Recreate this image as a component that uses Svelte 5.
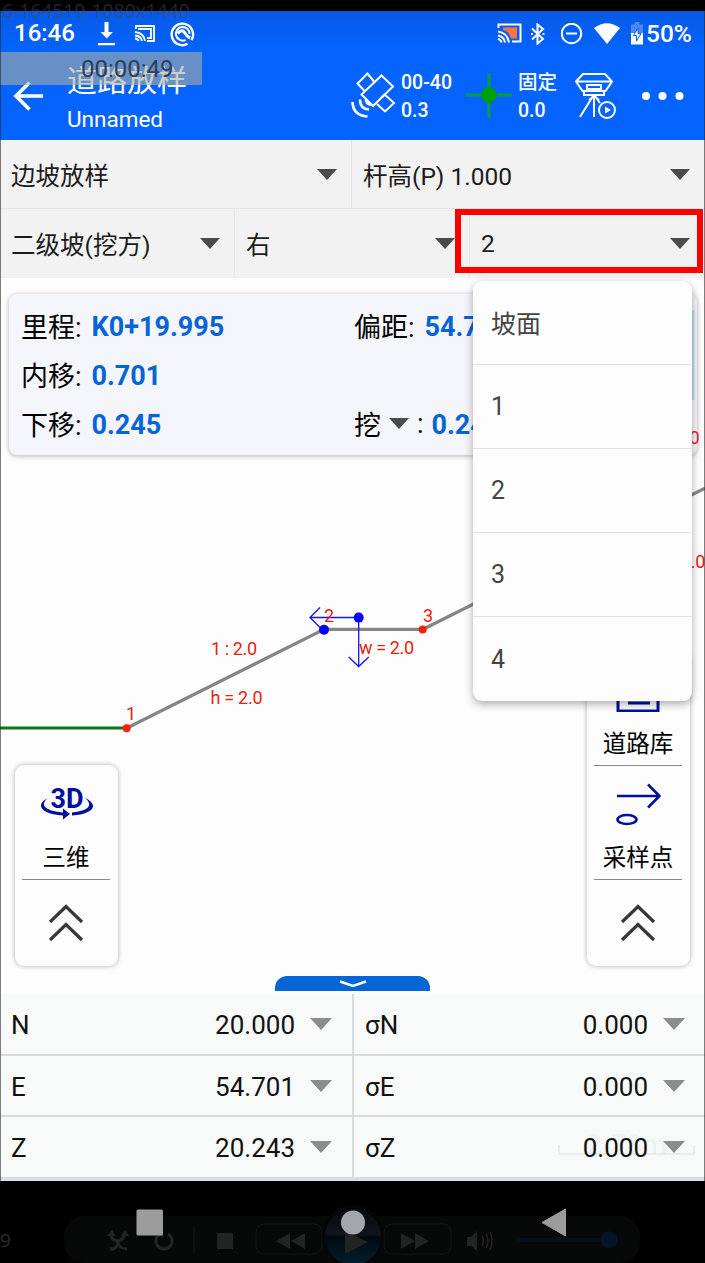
<script>
  const infoRows = [
    [{ label: '里程', value: 'K0+19.995' }, { label: '偏距', value: '54.701' }],
    [{ label: '内移', value: '0.701' }],
    [{ label: '下移', value: '0.245' }, { label: '挖', value: '0.245', select: true }],
  ];

  const coords = [
    { label: 'N', value: '20.000' },
    { label: 'σN', value: '0.000' },
    { label: 'E', value: '54.701' },
    { label: 'σE', value: '0.000' },
    { label: 'Z', value: '20.243' },
    { label: 'σZ', value: '0.000' },
  ];

  const layers = ['坡面', '1', '2', '3', '4'];

  let layer = $state('2');
  let menuOpen = $state(true);

  function pick(item) {
    layer = item;
    menuOpen = false;
  }
</script>

{#snippet caret()}
  <svg class="caret" width="20" height="11" viewBox="0 0 20 11"><path d="M0 0H20L10 11Z" fill="currentColor" /></svg>
{/snippet}

{#snippet chevrons()}
  <div class="expand">
    <svg width="36" height="38" viewBox="0 0 36 38" fill="none" stroke="#383838" stroke-width="3.2">
      <path d="M2 18L18 2.500L34 18M2 36L18 20.500L34 36" />
    </svg>
  </div>
{/snippet}

<div class="screen">
  <div class="top-strip"></div>

  <header>
    <div class="status">
      <span class="clock">16:46</span>
      <svg width="20" height="24" viewBox="0 0 20 24" fill="#fff"><path d="M7.500 0h4v10h4.500l-6.300 6.500L3.500 10h4zM1 21h17v2.200H1z" /></svg>
      <svg width="22" height="20" viewBox="0 0 22 20" fill="none" stroke="#fff" stroke-width="1.8">
        <path d="M2 5V2h18v15h-7M5 6V5h12v9h-4M1 8q9 1 10 9M1 11.500q6 .5 7 5.500M1 14.500q3 .3 3.500 2.500" />
      </svg>
      <svg width="26" height="26" viewBox="0 0 26 26" fill="none" stroke="#fff">
        <path d="M17.500 22.800A10.700 10.700 0 1 1 21.500 19" stroke-width="2.400" />
        <path d="M15.500 19A6.800 6.800 0 1 1 19.500 13" stroke-width="2" />
        <path d="M7.500 12.500Q12 7.500 14.500 11.500T20 17" stroke-width="3.200" />
      </svg>
      <svg width="25" height="21" viewBox="0 0 25 21" fill="none" stroke="#fff" stroke-width="2">
        <path d="M6 4.500h14v11h-6Q12 8 6 7z" fill="#ff743c" stroke="none" />
        <path d="M1.500 5V1.500h22v17H15M1 8.500q9 1 11 11M1 12.500q6 1 7 7M1 16q3 .5 3.500 3.500" />
      </svg>
      <svg width="16" height="22" viewBox="0 0 16 22" fill="none" stroke="#fff" stroke-width="2">
        <path d="M1 5.500L12 16L6.500 20.500V1.500L12 6L1 16.500" /><path d="M0 11h2M11.500 11h2" />
      </svg>
      <svg width="22" height="22" viewBox="0 0 22 22" fill="none" stroke="#fff" stroke-width="2"><circle cx="10.500" cy="10.500" r="9.700" /><path d="M5 10.500h11" /></svg>
      <svg width="26" height="22" viewBox="0 0 26 22"><path d="M0 5Q13-4.500 26 5L13 21Z" fill="#fff" /></svg>
      <svg width="12" height="23" viewBox="0 0 12 23">
        <path d="M3.500 0h5v2.500H12V11H0V2.500h3.500z" fill="#4c87f3" />
        <path d="M0 11h12v11.500H0z" fill="#fff" />
        <path d="M7 6L2.500 13.500h3V19L10 11.500H7z" fill="#fff" stroke="#0860ef" stroke-width="1" />
      </svg>
      <span class="battery">50%</span>
    </div>

    <div class="app-bar">
      <svg class="back" width="32" height="30" viewBox="0 0 32 30" fill="none" stroke="#fff" stroke-width="3.600"><path d="M30 15H3M16.500 1.500L3 15L16.500 28.500" /></svg>
      <div class="titles">
        <span class="title">道路放样</span>
        <span class="subtitle">Unnamed</span>
      </div>
      <svg width="46" height="48" viewBox="0 0 46 48" fill="none" stroke="#fff" stroke-width="2">
        <path d="M31.500 3.500L43 14.500L23 34L11.500 22.500Z" />
        <path d="M24 9.500L17.500 1.500L7.500 11.500L15 19.500M30 27L34.500 22.500L44 31L35 39.500L27 32" />
        <path d="M16 27Q15 32 21 33" stroke-width="2.200" />
        <path d="M10 27.500Q10 37 19 37.500M2.500 30Q3 43.500 17.500 44.500" stroke-width="2.700" />
      </svg>
      <div class="readout"><span>00-40</span><span>0.3</span></div>
      <svg width="46" height="46" viewBox="0 0 46 46"><path d="M0 22H46M23 0V45" stroke="#0a9b42" stroke-width="3" /><circle cx="23" cy="22" r="7.800" fill="#00a000" /></svg>
      <div class="readout"><span>固定</span><span>0.0</span></div>
      <svg width="42" height="48" viewBox="0 0 42 48" fill="none" stroke="#fff" stroke-width="2">
        <path d="M8 2H30L37 9.500L30.500 19H7.500L1 9.500ZM1.500 9.500H36.500M12 13H26V17H12ZM9 19.500V23H29V19.500" />
        <path d="M19 23V45M18 24L5 45M20 24L25 31M14 28L19 24L24 28" />
        <circle cx="32" cy="38" r="8" /><path d="M30 34.500L36 38L30 41.500Z" fill="#fff" stroke="none" />
      </svg>
      <svg width="44" height="10" viewBox="0 0 44 10" fill="#fff"><circle cx="5" cy="5" r="4" /><circle cx="21.500" cy="5" r="4" /><circle cx="38.500" cy="5" r="4" /></svg>
    </div>

    <span class="file-name">6-164519-1080x1440</span>
    <span class="rec-time">00:00:49</span>
  </header>

  <div class="selects two">
    <button class="select">边坡放样{@render caret()}</button>
    <button class="select">杆高(P) 1.000{@render caret()}</button>
  </div>
  <div class="selects three">
    <button class="select">二级坡(挖方){@render caret()}</button>
    <button class="select">右{@render caret()}</button>
    <div class="layer">
      <button class="select" onclick={() => (menuOpen = !menuOpen)}>{layer}{@render caret()}</button>
      <div class="highlight"></div>
      {#if menuOpen}
        <div class="menu">
          {#each layers as item}
            <button class="menu-item" onclick={() => pick(item)}>{item}</button>
          {/each}
        </div>
      {/if}
    </div>
  </div>

  <main>
    <div class="info">
      {#each infoRows as row}
        <div class="info-row">
          {#each row as cell}
            <div class="info-cell">
              {#if cell.select}
                <span>{cell.label}</span>{@render caret()}<span>:</span>
              {:else}
                <span class="name">{cell.label}:</span>
              {/if}
              <b>{cell.value}</b>
            </div>
          {/each}
        </div>
      {/each}
    </div>

    <svg class="profile" viewBox="0 278 705 716">
      <path d="M0 728H127" stroke="#087a12" stroke-width="3.200" />
      <path d="M127 728L324 629.300H423L705 488.300" fill="none" stroke="#858585" stroke-width="3.200" />
      <path d="M693 310V400" stroke="#c3dcea" stroke-width="3" />
      <g fill="#ff1e0a">
        <circle cx="126.700" cy="728.200" r="4" />
        <circle cx="422.700" cy="629.500" r="4" />
      </g>
      <g stroke="#1414e6" stroke-width="1.300" fill="none">
        <path d="M358.700 617.500H310M320 607.500L310 617.500L321 628.500" />
        <path d="M358.700 617.500V666.500M348.700 657L358.700 666.500L368.700 657" />
      </g>
      <g fill="#0505ff">
        <circle cx="324" cy="629.700" r="5" />
        <circle cx="358.700" cy="617.600" r="5" />
      </g>
      <g class="marks">
        <text x="126" y="719.500">1</text>
        <text x="324" y="621.500">2</text>
        <text x="423" y="621.500">3</text>
        <text x="211" y="655" textLength="46">1 : 2.0</text>
        <text x="210.500" y="704" textLength="52">h = 2.0</text>
        <text x="359" y="654" textLength="55">w = 2.0</text>
        <text x="699.500" y="444" text-anchor="end">0</text>
        <text x="705.500" y="568" text-anchor="end">.0</text>
      </g>
    </svg>

    <div class="tools">
      <div class="panel">
        <div class="tool">
          <svg width="54" height="40" viewBox="0 0 54 40">
            <text class="three-d" x="28" y="25.500" text-anchor="middle" textLength="33">3D</text>
            <path d="M9 16C-4 22 1 32 24 33.500V37.500L31 32L24 26.500V30.500C6 29 0 23 9 16Z" fill="#00109c" />
            <path d="M46 16C61 23 54 32 33 33.500V30.500C49 29 55 23 46 16Z" fill="#00109c" />
          </svg>
          <span>三维</span>
        </div>
        {@render chevrons()}
      </div>
      <div class="panel">
        <div class="tool">
          <svg width="54" height="44" viewBox="0 0 54 44" fill="none" stroke="#00109c" stroke-width="3"><path d="M7 3H47V43H7ZM17 15H39M17 25H39M17 35H39" /></svg>
          <span>道路库</span>
        </div>
        <div class="tool">
          <svg width="54" height="44" viewBox="0 0 54 44" fill="none" stroke="#00109c" stroke-width="2.600">
            <path d="M6 13H48M37 1.500L48.500 13L37 24.500" stroke-linejoin="round" /><ellipse cx="16" cy="36.500" rx="9.500" ry="4.500" />
          </svg>
          <span>采样点</span>
        </div>
        {@render chevrons()}
      </div>
    </div>

    <button class="drawer-tab" aria-label="collapse">
      <svg width="28" height="8" viewBox="0 0 28 8" fill="none" stroke="#fff" stroke-width="2.400"><path d="M1 1.500L14 6L27 1.500" /></svg>
    </button>
  </main>

  <div class="coords">
    {#each coords as item}
      <div class="coord">
        <span>{item.label}</span>
        <span class="value">{item.value}</span>
        <svg width="22" height="12" viewBox="0 0 22 12"><path d="M0 0H22L11 12Z" fill="#8c8c8c" /></svg>
      </div>
    {/each}
    <div class="scale">2.78m</div>
  </div>

  <footer>
    <svg width="705" height="82" viewBox="0 1181 705 82">
      <defs>
        <linearGradient id="orb" x1="0" y1="0" x2="0" y2="1">
          <stop offset="0" stop-color="#07090c" />
          <stop offset=".45" stop-color="#10151d" />
          <stop offset=".5" stop-color="#020812" />
          <stop offset="1" stop-color="#03202c" />
        </linearGradient>
      </defs>
      <rect x="64" y="1216" width="576" height="47" rx="20" fill="#070909" />
      <g fill="none" stroke="#141616">
        <rect x="256" y="1224" width="66" height="30" rx="8" />
        <rect x="384" y="1224" width="67" height="30" rx="8" />
        <path d="M194 1226V1254" />
      </g>
      <circle cx="353" cy="1236" r="31" fill="#050606" />
      <circle cx="353" cy="1237" r="28" fill="url(#orb)" />
      <g fill="none" stroke="#242626" stroke-width="3">
        <path d="M110 1249H113Q118 1247 118 1241Q124 1240 125 1233M111 1233Q111 1240 117 1241Q119 1249 127 1249" />
        <path d="M160 1234A8 8 0 1 0 168 1234" />
        <path d="M482 1236Q485 1241 482 1246M486 1234Q490 1241 486 1248M490 1232Q494 1241 490 1250" stroke-width="1.500" />
      </g>
      <g fill="#222424">
        <path d="M107 1236L112 1230L116 1236ZM121 1236L125 1230L129 1236ZM156 1231H163V1238Z" />
        <rect x="217" y="1233" width="16" height="16" />
        <path d="M276 1241L290 1233V1249ZM291 1241L305 1233V1249Z" />
        <path d="M345 1231L368 1242L345 1254Z" />
        <path d="M401 1233L415 1241L401 1249ZM415 1233L429 1241L415 1249Z" />
        <path d="M467 1237H471L477 1231V1251L471 1246H467Z" />
      </g>
      <path d="M516 1240H604" stroke="#040f22" stroke-width="4" />
      <circle cx="609" cy="1240" r="8.500" fill="#051428" />
      <text x="-6" y="1247" class="ghost-count">-9</text>
      <rect x="136.500" y="1209.500" width="26.500" height="26" rx="1.500" fill="#9c9c9c" />
      <circle cx="353" cy="1222.500" r="12" fill="#a3a6ab" />
      <path d="M542 1222.500L565.500 1209V1236Z" fill="#9c9c9c" stroke="#9c9c9c" stroke-linejoin="round" />
    </svg>
  </footer>
</div>

<style>
  :global(body) {
    background: #000;
  }

  .screen {
    position: relative;
    display: flex;
    flex-direction: column;
    width: 705px;
    height: 1263px;
    overflow: hidden;
    background: #000;
    color: #000;
    font-family: Roboto, 'Noto Sans CJK SC', sans-serif;
  }

  /* thin frame on both sides of the phone picture */
  .screen::after {
    content: '';
    position: absolute;
    inset: 11px 0 82px;
    border: solid rgba(40, 40, 40, 0.6);
    border-width: 0 1px;
    pointer-events: none;
  }

  button {
    border: 0;
    margin: 0;
    font: inherit;
    color: inherit;
    text-align: left;
  }

  .caret {
    flex: none;
    color: #4b4b4b;
  }

  .top-strip {
    height: 11px;
  }

  header {
    position: relative;
    height: 129px;
    background: linear-gradient(#065ae6, #0563ff 40px);
    color: #fff;
  }

  .status {
    display: grid;
    grid-template-columns: 82px 37px 36px 327px 34px 30px 33px 37px 16px auto;
    align-items: center;
    height: 41px;
    padding-left: 15px;
  }

  .clock {
    font-size: 24px;
    font-weight: 500;
    line-height: 43px;
    margin-left: -1px;
  }

  .battery {
    font-size: 24.5px;
    font-weight: 500;
    line-height: 44px;
    margin-left: -1px;
    padding-top: 1px;
  }

  .app-bar {
    display: grid;
    grid-template-columns: 54px 283px 51px 65px 52px 57px 66px auto;
    align-items: center;
    height: 88px;
    padding-left: 13px;
  }

  .titles {
    display: flex;
    flex-direction: column;
  }

  .title {
    font-size: 30px;
    line-height: 40px;
    margin-top: 4px;
  }

  .subtitle {
    font-size: 22.5px;
    line-height: 32px;
    padding-top: 2px;
  }

  .readout {
    display: flex;
    flex-direction: column;
    padding-top: 2px;
    font-size: 19.5px;
    font-weight: 500;
    line-height: 28px;
  }

  .file-name {
    position: absolute;
    top: -13px;
    left: 2px;
    font: 19.3px/26px 'Open Sans', sans-serif;
    color: rgba(75, 75, 75, 0.5);
  }

  .rec-time {
    position: absolute;
    top: 41px;
    left: 0;
    box-sizing: border-box;
    width: 202px;
    padding: 2px 0 0 81px;
    font-size: 24px;
    line-height: 31px;
    color: #2c3e5c;
    background: rgba(170, 175, 160, 0.6);
  }

  .selects {
    display: grid;
    background: #f2f2f2;
  }

  .two {
    grid-template-columns: 351px 354px;
    height: 68px;
    border-bottom: 1px solid #e4e4e4;
  }

  .three {
    grid-template-columns: 234px 235px 236px;
    height: 69px;
  }

  .select {
    display: flex;
    justify-content: space-between;
    align-items: center;
    box-sizing: border-box;
    width: 100%;
    height: 100%;
    padding: 0 14px 0 11px;
    font-size: 24.5px;
    color: #1c1c1c;
    background: none;
  }

  .select + .select,
  .layer {
    border-left: 1px solid #e4e4e4;
  }

  .two .select:last-child,
  .layer .select {
    padding-right: 15px;
  }

  .layer {
    position: relative;
    z-index: 2;
  }

  .highlight {
    position: absolute;
    top: 0;
    left: -15px;
    box-sizing: border-box;
    width: 248px;
    height: 64px;
    border: 6px solid #f00;
    pointer-events: none;
  }

  .menu {
    position: absolute;
    top: 72px;
    left: 3px;
    width: 219px;
    border-radius: 9px;
    background: #fdfdfd;
    box-shadow: 0 3px 9px rgba(0, 0, 0, 0.33);
  }

  .menu-item {
    display: block;
    box-sizing: border-box;
    width: 100%;
    height: 84px;
    padding: 0 18px;
    font-size: 25px;
    color: #444;
    background: none;
  }

  .menu-item:first-child {
    height: 83px;
    padding-bottom: 1px;
  }

  .menu-item:last-child {
    height: 85px;
  }

  .menu-item + .menu-item {
    border-top: 1px solid #e2e2e2;
  }

  main {
    position: relative;
    display: flex;
    flex-direction: column;
    flex: 1;
    background: #fdfdfd;
  }

  .info {
    margin: 16px 8px 0 9px;
    padding: 7px 12px;
    border-radius: 8px;
    background: #f5f6fb;
    box-shadow: 0 1px 5px rgba(0, 0, 0, 0.3);
  }

  .info-row {
    display: grid;
    grid-template-columns: 333px auto;
    height: 49px;
  }

  .info-cell {
    display: flex;
    align-items: center;
    gap: 8px;
    font-size: 27px;
  }

  .name {
    margin-right: 2px;
  }

  .info-cell b {
    padding-top: 3px;
    font-weight: 700;
    color: #0564d6;
  }

  .profile {
    position: absolute;
    inset: 0;
    width: 705px;
    height: 716px;
  }

  .marks {
    font-size: 18px;
    fill: #e8220f;
  }

  .tools {
    position: relative;
    display: flex;
    justify-content: space-between;
    align-items: flex-end;
    margin-top: auto;
    padding: 0 15px;
  }

  .panel {
    width: 103px;
    border-radius: 9px;
    background: #fdfdfd;
    box-shadow: 0 0 5px rgba(0, 0, 0, 0.32);
  }

  .tool {
    display: flex;
    flex-direction: column;
    align-items: center;
    justify-content: space-between;
    box-sizing: border-box;
    height: 114px;
    margin: 0 8px 0 7px;
    padding: 17px 0 5px;
    border-bottom: 1px solid #8a8a8a;
    font-size: 23.5px;
    line-height: 32px;
  }

  .panel .tool:first-child {
    height: 115px;
  }

  .three-d {
    font-size: 27px;
    font-weight: 700;
    fill: #00109c;
  }

  .expand {
    display: flex;
    justify-content: center;
    align-items: center;
    height: 86px;
    margin-right: 1px;
  }

  .drawer-tab {
    position: relative;
    display: flex;
    justify-content: center;
    align-items: center;
    align-self: center;
    width: 155px;
    height: 15px;
    margin: 10px 0 3px;
    padding: 0;
    border-radius: 12px 12px 0 0;
    background: #0564d6;
  }

  .coords {
    position: relative;
    display: grid;
    grid-template-columns: 352px 353px;
    padding-bottom: 2px;
    background: #d7e2ec;
  }

  .coord {
    display: flex;
    align-items: center;
    box-sizing: border-box;
    height: 61.67px;
    padding: 2px 20px 0 11px;
    font-size: 26px;
    color: #111;
    background: #f8faf9;
    border-bottom: 2px solid #d9dcdc;
  }

  .coord:nth-child(even) {
    border-left: 2px solid #d9dcdc;
  }

  .coord svg {
    margin-bottom: 2px;
  }

  .value {
    margin-left: auto;
    margin-right: 15px;
  }

  .scale {
    position: absolute;
    right: 10px;
    bottom: 26px;
    width: 133px;
    height: 8px;
    border: 2px solid rgba(0, 0, 0, 0.05);
    border-top: 0;
    font-size: 28px;
    font-weight: 700;
    line-height: 0;
    text-align: center;
    color: rgba(0, 0, 0, 0.04);
    text-shadow: none;
  }

  footer {
    height: 82px;
  }

  footer svg {
    display: block;
  }

  .ghost-count {
    font: 19px 'Open Sans', sans-serif;
    fill: #2c2c2c;
  }
</style>
